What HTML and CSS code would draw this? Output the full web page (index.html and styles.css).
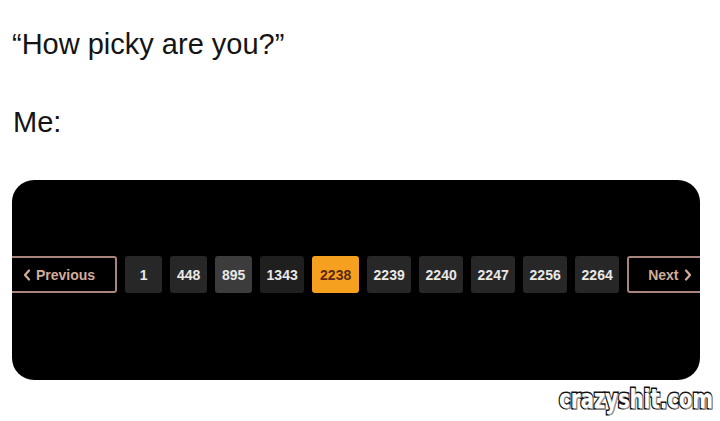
FILE: index.html
```html
<!DOCTYPE html>
<html lang="en">
<head>
    <meta charset="UTF-8">
    <meta name="viewport" content="width=device-width, initial-scale=1.0">
    <title>How picky are you?</title>
    <link rel="stylesheet" href="styles.css">
</head>
<body>
    <div class="post">
        <p class="line">“How picky are you?”</p>
        <p class="line line-me">Me:</p>

        <!-- Скриншот пагинации -->
        <div class="shot">
            <nav class="pager">
                <a class="pager-edge prev" href="#">
                    <svg width="8" height="12" viewBox="0 0 8 12"><polyline points="6,1.5 2,6 6,10.5" fill="none" stroke="currentColor" stroke-width="2.2" stroke-linecap="round" stroke-linejoin="round"/></svg>
                    Previous
                </a>
                <a class="page" href="#">1</a>
                <a class="page" href="#">448</a>
                <a class="page page-hover" href="#">895</a>
                <a class="page page-wide page-dim" href="#">1343</a>
                <a class="page page-active" href="#">2238</a>
                <a class="page page-wide" href="#">2239</a>
                <a class="page page-wide" href="#">2240</a>
                <a class="page page-wide" href="#">2247</a>
                <a class="page page-wide" href="#">2256</a>
                <a class="page page-wide" href="#">2264</a>
                <a class="pager-edge next" href="#">
                    Next
                    <svg width="8" height="12" viewBox="0 0 8 12"><polyline points="2,1.5 6,6 2,10.5" fill="none" stroke="currentColor" stroke-width="2.2" stroke-linecap="round" stroke-linejoin="round"/></svg>
                </a>
            </nav>
        </div>
    </div>

    <div class="watermark">crazyshit.com</div>
</body>
</html>
```

FILE: styles.css
```css
body {
    margin: 0;
    background-color: #fff;
    color: #141414;
    font-family: 'Liberation Sans', Arial, sans-serif;
    width: 720px;
    height: 421px;
    position: relative;
    overflow: hidden;
}

.post {
    padding: 27px 20px 0 12px;
}

.line {
    margin: 0;
    font-size: 29px;
    line-height: 34px;
}

.line-me {
    margin-top: 44px;
    padding-left: 1px;
}

.shot {
    margin-top: 41px;
    height: 200px;
    background-color: #000;
    border-radius: 22px;
    overflow: hidden;
    padding-top: 76px;
    box-sizing: border-box;
}

.pager {
    display: flex;
    gap: 8px;
    margin-left: -10px;
    font-weight: bold;
    font-size: 14px;
}

.pager a {
    flex-shrink: 0;
    height: 37px;
    box-sizing: border-box;
    display: flex;
    align-items: center;
    justify-content: center;
    text-decoration: none;
    border-radius: 3px;
}

.pager-edge {
    border: 2px solid #a8857c;
    color: #d2ad9a;
    padding: 0 19px;
    gap: 5px;
}

.prev {
    padding-right: 20px;
}

.page {
    width: 37px;
    background-color: #272727;
    color: #e8e8e8;
}

.page-wide {
    width: 44px;
}

.page-dim {
    background-color: #1f1f1f;
}

.page-hover {
    background-color: #3c3c3c;
}

.page-active {
    width: 47px;
    background-color: #f5a11f;
    color: #5a2a10;
}

.watermark {
    position: absolute;
    right: 7px;
    top: 384px;
    font-family: 'DejaVu Sans Condensed', 'DejaVu Sans', sans-serif;
    font-stretch: condensed;
    font-weight: bold;
    font-size: 21px;
    color: #fff;
    -webkit-text-stroke: 2.4px #111;
    paint-order: stroke fill;
    text-shadow: 1px 1px 0 #9a9a9a;
    transform: scale(1.04, 1.25);
    transform-origin: right top;
}
```
